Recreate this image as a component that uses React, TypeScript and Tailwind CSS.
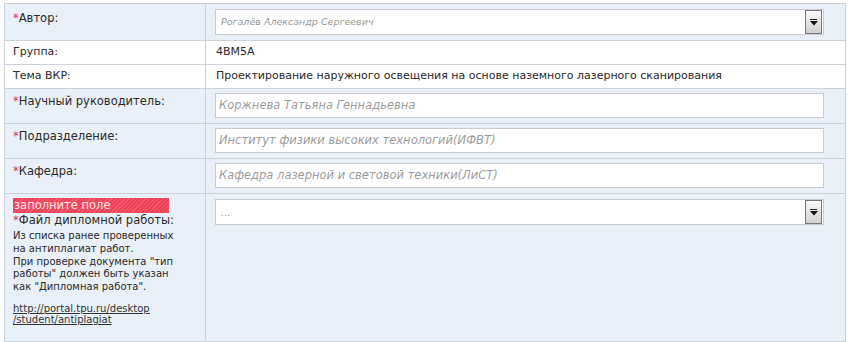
import React from "react";

const font = { fontFamily: '"DejaVu Sans", Verdana, sans-serif' };

function Star() {
  return <span className="text-[#e0393e]">*</span>;
}

function DropBtn() {
  return (
    <div className="flex h-[24px] w-[17px] shrink-0 flex-col items-center border border-[#787878] bg-[linear-gradient(#fafafa,#cfcfcf)] pt-[8px]">
      <div className="h-[1px] w-[7px] bg-[#222]" />
      <svg width="8" height="5" viewBox="0 0 8 5" className="mt-[1px]">
        <path d="M0 0H8L4 4.5Z" fill="#111" />
      </svg>
    </div>
  );
}

function Select({ text, small }: { text: string; small?: boolean }) {
  return (
    <div className="ml-[9px] mt-[5px] flex h-[26px] w-[609px] items-center border border-[#c9cdd2] bg-white pl-[5px] pr-[1px]">
      <span className={"flex-1 italic text-[#9a9a9a] " + (small ? "text-[9.5px]" : "text-[10px]")}>{text}</span>
      <DropBtn />
    </div>
  );
}

function Input({ text }: { text: string }) {
  return (
    <div className="ml-[9px] mt-[4px] flex h-[25px] w-[609px] items-center border border-[#c9cdd2] bg-white pl-[3px]">
      <span className="text-[11.5px] italic text-[#9d9d9d]">{text}</span>
    </div>
  );
}

export default function App() {
  return (
    <div className="h-[342px] w-[851px] bg-white pl-[4px] pt-[3px] text-[#2a2a2a]" style={font}>
      <div className="w-[842px] border-l border-r border-t border-[#cdd3da]">
        {/* Автор */}
        <div className="grid h-[37px] grid-cols-[201px_1fr] border-b border-[#cdd3da] bg-[#eaf0f7]">
          <div className="border-r border-[#cdd3da] pl-[8px] pt-[6px] text-[11.5px]">
            <Star />Автор:
          </div>
          <div>
            <Select text="Рогалёв Александр Сергеевич" small />
          </div>
        </div>
        {/* Группа */}
        <div className="grid h-[24px] grid-cols-[201px_1fr] border-b border-[#cdd3da] bg-white">
          <div className="flex items-center border-r border-[#cdd3da] pl-[8px] text-[11px]">Группа:</div>
          <div className="flex items-center pl-[10px] text-[11px]">4ВМ5А</div>
        </div>
        {/* Тема */}
        <div className="grid h-[24px] grid-cols-[201px_1fr] border-b border-[#cdd3da] bg-white">
          <div className="flex items-center border-r border-[#cdd3da] pl-[8px] text-[11px]">Тема ВКР:</div>
          <div className="flex items-center pl-[10px] text-[11px]">
            Проектирование наружного освещения на основе наземного лазерного сканирования
          </div>
        </div>
        {/* Научный */}
        <div className="grid h-[35px] grid-cols-[201px_1fr] border-b border-[#cdd3da] bg-[#eaf0f7]">
          <div className="border-r border-[#cdd3da] pl-[8px] pt-[4px] text-[11.5px]">
            <Star />Научный руководитель:
          </div>
          <div>
            <Input text="Коржнева Татьяна Геннадьевна" />
          </div>
        </div>
        {/* Подразделение */}
        <div className="grid h-[35px] grid-cols-[201px_1fr] border-b border-[#cdd3da] bg-[#eaf0f7]">
          <div className="border-r border-[#cdd3da] pl-[8px] pt-[4px] text-[11.5px]">
            <Star />Подразделение:
          </div>
          <div>
            <Input text="Институт физики высоких технологий(ИФВТ)" />
          </div>
        </div>
        {/* Кафедра */}
        <div className="grid h-[35px] grid-cols-[201px_1fr] border-b border-[#cdd3da] bg-[#eaf0f7]">
          <div className="border-r border-[#cdd3da] pl-[8px] pt-[4px] text-[11.5px]">
            <Star />Кафедра:
          </div>
          <div>
            <Input text="Кафедра лазерной и световой техники(ЛиСТ)" />
          </div>
        </div>
        {/* Файл */}
        <div className="grid h-[148px] grid-cols-[201px_1fr] border-b border-[#cdd3da] bg-[#eaf0f7]">
          <div className="border-r border-[#cdd3da] pl-[8px] pt-[4px]">
            <div className="h-[15px] w-[156px] bg-[repeating-linear-gradient(-45deg,#ee4259_0px,#ee4259_2px,#f25c70_2px,#f25c70_3px)] pl-[1px] text-[11.5px] leading-[15px] text-[#ffe3e6]">
              заполните поле
            </div>
            <div className="text-[11.5px] leading-[15px]">
              <Star />Файл дипломной работы:
            </div>
            <div className="mt-[2px] text-[10px] leading-[12.8px]">
              Из списка ранее проверенных
              <br />
              на антиплагиат работ.
              <br />
              При проверке документа "тип
              <br />
              работы" должен быть указан
              <br />
              как "Дипломная работа".
            </div>
            <div className="mt-[9px] text-[10px] leading-[11px] text-[#333] underline">
              http://portal.tpu.ru/desktop
              <br />
              /student/antiplagiat
            </div>
          </div>
          <div>
            <Select text="..." />
          </div>
        </div>
      </div>
    </div>
  );
}
